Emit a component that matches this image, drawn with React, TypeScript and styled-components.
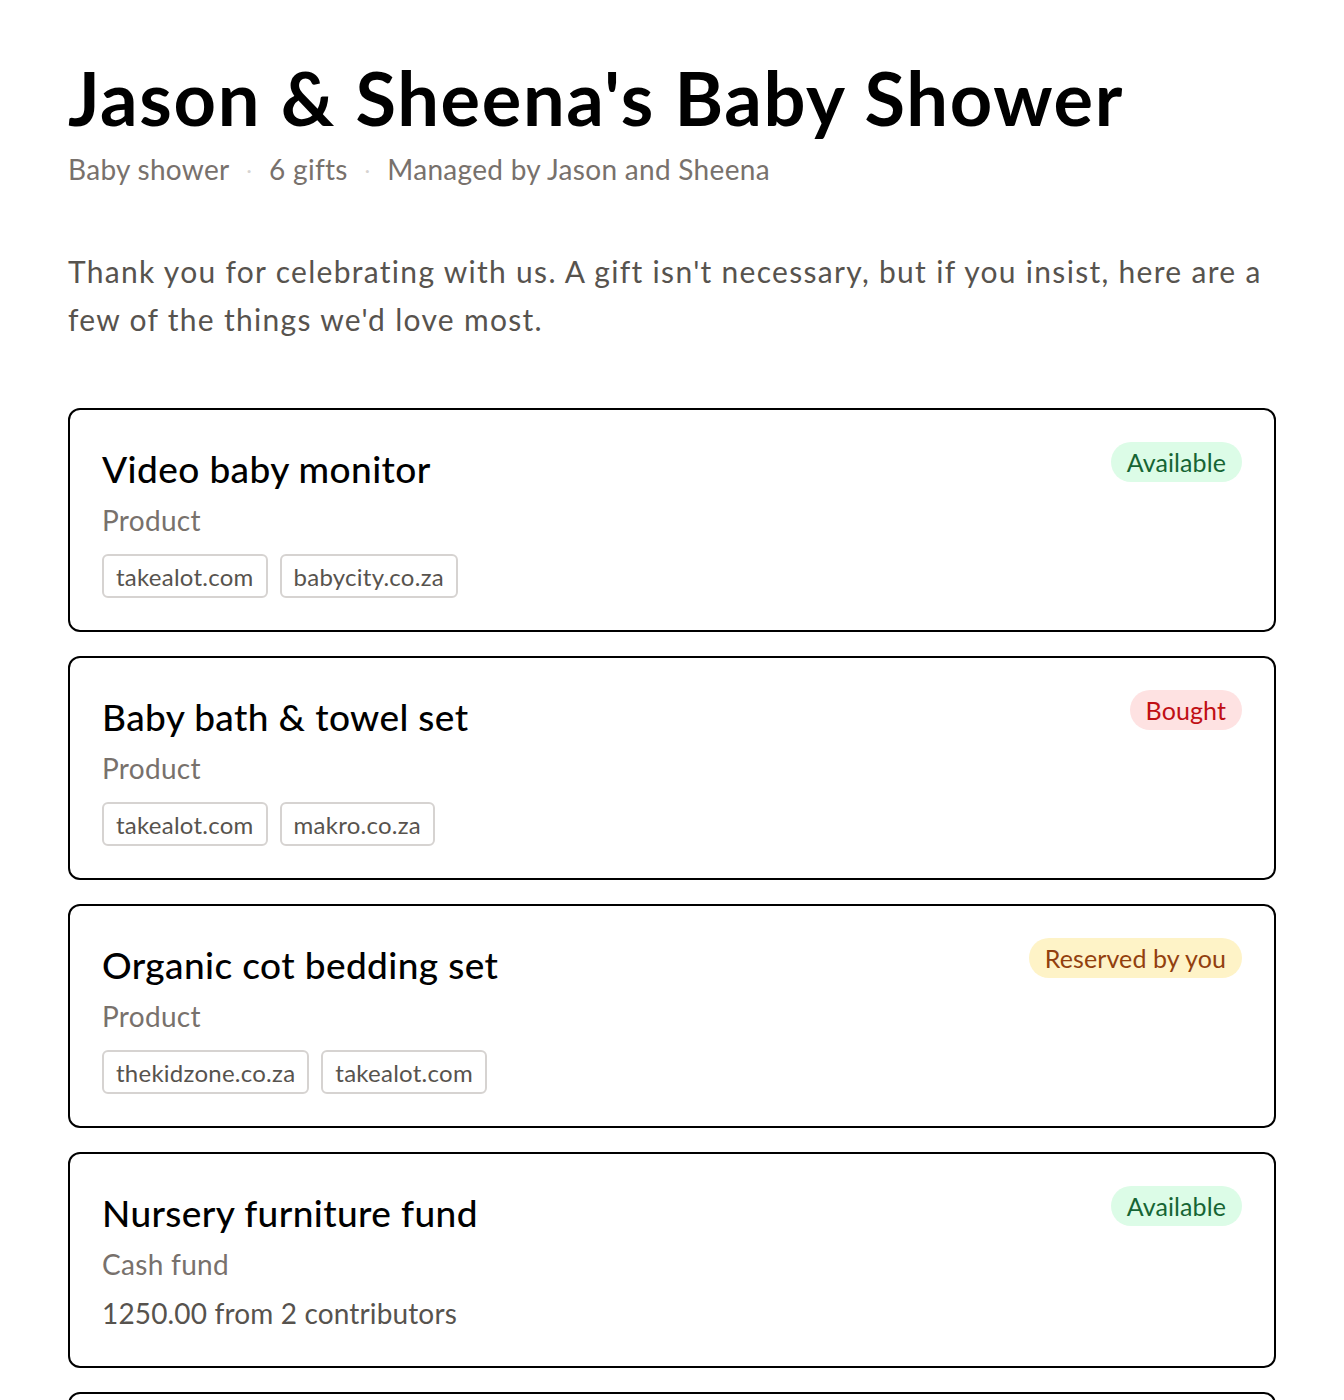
import React from "react";
import styled, { createGlobalStyle } from "styled-components";

const Global = createGlobalStyle`
  html, body { margin: 0; padding: 0; background: #ffffff; }
  body { font-family: "Lato", "Noto Sans", sans-serif; color: #000; }
  * { box-sizing: border-box; }
`;

const Page = styled.main`
  padding: 55px 68px 40px;
  display: flex;
  flex-direction: column;
`;

const Title = styled.h1`
  margin: 0;
  font-size: 74px;
  line-height: 86px;
  font-weight: 700;
  color: #000;
  letter-spacing: 1.65px;
`;

const Meta = styled.div`
  display: flex;
  align-items: center;
  gap: 17px;
  margin-top: 8px;
  font-size: 28px;
  line-height: 40px;
  letter-spacing: 0.3px;
  color: #78716c;
`;

const Dot = styled.span`
  color: #d6d3d1;
  font-size: 20px;
`;

const Intro = styled.p`
  margin: 58px 0 0;
  font-size: 30px;
  line-height: 48px;
  letter-spacing: 1.3px;
  color: #57534e;
`;

const List = styled.div`
  margin-top: 65px;
  display: flex;
  flex-direction: column;
  gap: 24px;
`;

const Card = styled.article`
  border: 2px solid #000;
  border-radius: 12px;
  padding: 32px;
  display: flex;
  justify-content: space-between;
  align-items: flex-start;
  gap: 24px;
`;

const Body = styled.div`
  display: flex;
  flex-direction: column;
`;

const GiftName = styled.h2`
  margin: 0;
  font-size: 37px;
  line-height: 54px;
  font-weight: 500;
  letter-spacing: 0.4px;
  color: #000;
`;

const Kind = styled.div`
  margin-top: 3px;
  font-size: 28px;
  line-height: 42px;
  letter-spacing: 0.3px;
  color: #78716c;
`;

const Stores = styled.div`
  display: flex;
  gap: 12px;
  margin-top: 13px;
`;

const Store = styled.span`
  display: inline-flex;
  align-items: center;
  height: 44px;
  padding: 0 12px;
  border: 2px solid #d6d3d1;
  border-radius: 6px;
  font-size: 24px;
  letter-spacing: 0.25px;
  color: #57534e;
`;

const Amount = styled.div`
  margin-top: 7px;
  font-size: 28px;
  line-height: 42px;
  letter-spacing: 0.15px;
  color: #57534e;
`;

type Status = "available" | "bought" | "reserved";

const badgeColors: Record<Status, { bg: string; fg: string }> = {
  available: { bg: "#dcfce7", fg: "#166534" },
  bought: { bg: "#fee2e2", fg: "#c00f14" },
  reserved: { bg: "#fef3c7", fg: "#92400e" },
};

const Badge = styled.span<{ $status: Status }>`
  flex-shrink: 0;
  display: inline-flex;
  align-items: center;
  height: 40px;
  padding: 0 16px;
  border-radius: 999px;
  font-size: 25px;
  letter-spacing: 0.1px;
  background: ${(p) => badgeColors[p.$status].bg};
  color: ${(p) => badgeColors[p.$status].fg};
`;

const badgeText: Record<Status, string> = {
  available: "Available",
  bought: "Bought",
  reserved: "Reserved by you",
};

type Gift = {
  name: string;
  kind: string;
  status: Status;
  stores?: string[];
  amount?: string;
};

const gifts: Gift[] = [
  { name: "Video baby monitor", kind: "Product", status: "available", stores: ["takealot.com", "babycity.co.za"] },
  { name: "Baby bath & towel set", kind: "Product", status: "bought", stores: ["takealot.com", "makro.co.za"] },
  { name: "Organic cot bedding set", kind: "Product", status: "reserved", stores: ["thekidzone.co.za", "takealot.com"] },
  { name: "Nursery furniture fund", kind: "Cash fund", status: "available", amount: "1250.00 from 2 contributors" },
  { name: "Nappy subscription", kind: "Cash fund", status: "available", amount: "400.00 from 1 contributor" },
  { name: "Baby carrier", kind: "Product", status: "available", stores: ["babycity.co.za"] },
];

export default function App() {
  return (
    <>
      <Global />
      <Page>
        <Title>Jason &amp; Sheena's Baby Shower</Title>
        <Meta>
          <span>Baby shower</span>
          <Dot>·</Dot>
          <span>6 gifts</span>
          <Dot>·</Dot>
          <span>Managed by Jason and Sheena</span>
        </Meta>
        <Intro>
          Thank you for celebrating with us. A gift isn't necessary, but if you insist, here are a few of the
          things we'd love most.
        </Intro>
        <List>
          {gifts.map((g) => (
            <Card key={g.name}>
              <Body>
                <GiftName>{g.name}</GiftName>
                <Kind>{g.kind}</Kind>
                {g.stores && (
                  <Stores>
                    {g.stores.map((s) => (
                      <Store key={s}>{s}</Store>
                    ))}
                  </Stores>
                )}
                {g.amount && <Amount>{g.amount}</Amount>}
              </Body>
              <Badge $status={g.status}>{badgeText[g.status]}</Badge>
            </Card>
          ))}
        </List>
      </Page>
    </>
  );
}
